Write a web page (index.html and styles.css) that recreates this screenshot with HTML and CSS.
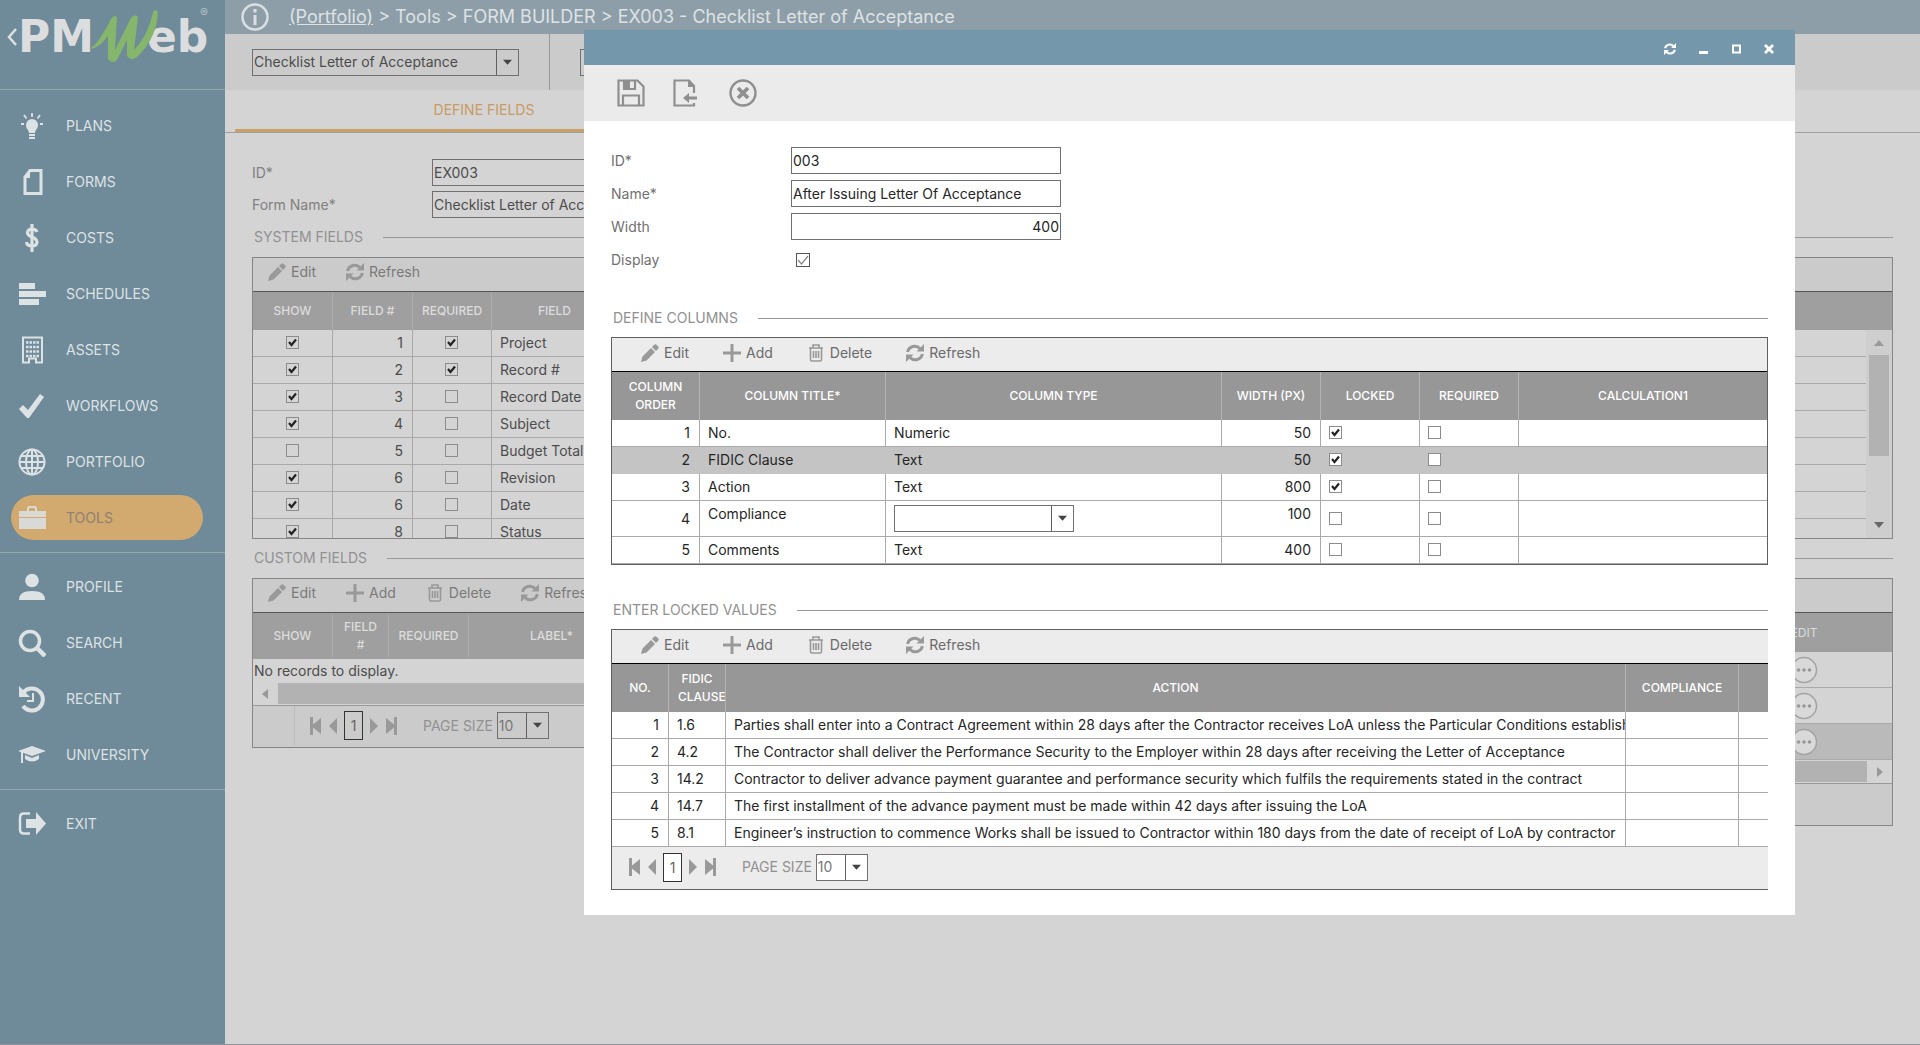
FILE: index.html
```
<!DOCTYPE html>
<html lang="en">

<head>
    <meta charset="UTF-8">
    <meta name="viewport" content="width=device-width, initial-scale=1.0">
    <title>PMWeb - Form Builder</title>
    <link rel="stylesheet" href="styles.css">
</head>

<body>

    <!-- shared icons -->
    <svg class="sprite" aria-hidden="true">
        <symbol id="i-edit" viewBox="0 0 18 18"><path d="M0 18l1.500-5.500L10 4l4 4-8.500 8.500zM11 3l2.200-2.200a1.500 1.500 0 0 1 2.200 0l1.800 1.800a1.500 1.500 0 0 1 0 2.200L15 7z"/></symbol>
        <symbol id="i-add" viewBox="0 0 18 18"><path d="M7.500 0h3v7.500H18v3h-7.500V18h-3v-7.500H0v-3h7.500z"/></symbol>
        <symbol id="i-delete" viewBox="0 0 16 18"><path d="M1 4h14M5 4V1h6v3M2.500 4v11.500q0 1.500 1.500 1.500h8q1.500 0 1.500-1.500V4M5.500 7v7M8 7v7M10.500 7v7" fill="none" stroke="currentColor" stroke-width="1.600"/></symbol>
        <symbol id="i-refresh" viewBox="0 0 18 18"><path d="M1.600 8A7.300 7.300 0 0 1 14 4.500M16.400 10A7.300 7.300 0 0 1 4 13.500" fill="none" stroke="currentColor" stroke-width="3"/><path d="M18 0v7.500h-7.500zM0 18v-7.500h7.500z"/></symbol>
        <symbol id="i-first" viewBox="0 0 12 18"><path d="M0 0h3v7.500L11 1v16L3 10.500V18H0z"/></symbol>
        <symbol id="i-prev" viewBox="0 0 8 18"><path d="M8 1v16L0 9z"/></symbol>
        <symbol id="i-next" viewBox="0 0 8 18"><path d="M0 1v16l8-8z"/></symbol>
        <symbol id="i-last" viewBox="0 0 12 18"><path d="M12 0H9v7.500L1 1v16l8-6.500V18h3z"/></symbol>
        <symbol id="i-dots" viewBox="0 0 28 28"><circle cx="14" cy="14" r="12.500" fill="#d9d9d9" stroke="#a3a3a3" stroke-width="1.500"/><circle cx="8.500" cy="14" r="1.800"/><circle cx="14" cy="14" r="1.800"/><circle cx="19.500" cy="14" r="1.800"/></symbol>
    </svg>

    <aside class="sidebar">
        <div class="brand">
            <svg width="225" height="89" viewBox="0 0 225 89" role="img" aria-label="PMWeb">
                <path d="M16 29l-7 8 7 8" fill="none" stroke="#d9e1e6" stroke-width="2.500"/>
                <text x="18" y="52" class="logo-text">PM</text>
                <text x="147" y="52" class="logo-text">eb</text>
                <path d="M89 49C96 46 104 33 111 19Q114 14 117 17L115 50 131 18Q136 13 138 17L134 50Q148 36 153 12 156 8 158 12 157 38 137 57 131 62 127 56L127 40 117 60Q112 65 108 59L108 36Q99 49 89 49z" fill="#86b56c"/>
                <text x="200" y="17" class="logo-mark">®</text>
            </svg>
        </div>
        <nav>
            <ul class="menu">
                <li><a href="#"><svg viewBox="0 0 28 28"><path d="M14 7a6 6 0 0 0-6 6c0 3.500 2.500 4.500 3 8h6c.500-3.500 3-4.500 3-8a6 6 0 0 0-6-6zM11 22h6v2h-6zM11 25h6v2h-6z"/><path d="M14 1v4M6 3l2.500 3.500M22 3l-2.500 3.500M3 12h3M22 12h3" stroke="currentColor" stroke-width="1.800"/></svg>PLANS</a></li>
                <li><a href="#"><svg viewBox="0 0 28 28"><path d="M12 2.500h11v23H7V9z" fill="none" stroke="currentColor" stroke-width="3"/><path d="M12 2v8H6z"/></svg>FORMS</a></li>
                <li><a href="#"><svg viewBox="0 0 28 28"><path d="M19 8q-1-3-5-3t-4.500 3.500q0 3 4.500 4.500t5 5q0 4-5 4t-5.500-4M14 0v28" fill="none" stroke="currentColor" stroke-width="3.200"/></svg>COSTS</a></li>
                <li><a href="#"><svg viewBox="0 0 28 28"><path d="M1 3h16v6H1zM1 11h27v6H1zM1 19h20v6H1z"/></svg>SCHEDULES</a></li>
                <li><a href="#"><svg viewBox="0 0 28 28"><path d="M5 1.500h19v25h-6v-4h-7v4H5z" fill="none" stroke="currentColor" stroke-width="2"/><path d="M8 6.500h13M8 11h13M8 15.500h13M8 20h13" stroke="currentColor" stroke-width="2.500" stroke-dasharray="2.500 1"/></svg>ASSETS</a></li>
                <li><a href="#"><svg viewBox="0 0 28 28"><path d="M1 17l4-4 5 5L22 2l4 3-15 21H9z"/></svg>WORKFLOWS</a></li>
                <li><a href="#"><svg viewBox="0 0 28 28"><g fill="none" stroke="currentColor" stroke-width="2"><circle cx="14" cy="14" r="12.500"/><ellipse cx="14" cy="14" rx="6" ry="12.500"/><path d="M14 1v26M1 14h26M3 8h22M3 20h22"/></g></svg>PORTFOLIO</a></li>
                <li class="active"><a href="#"><svg viewBox="0 0 28 28"><path d="M9 7V4q0-2 2-2h6q2 0 2 2v3h9v6H1V7zm2 0h6V4h-6zM1 14h27v11H1z"/></svg>TOOLS</a></li>
            </ul>
            <ul class="menu">
                <li><a href="#"><svg viewBox="0 0 28 28"><circle cx="14" cy="7.500" r="6.800"/><path d="M1 27c0-6 4-9 13-9s13 3 13 9z"/></svg>PROFILE</a></li>
                <li><a href="#"><svg viewBox="0 0 28 28"><circle cx="12" cy="12" r="9.500" fill="none" stroke="currentColor" stroke-width="3.500"/><path d="M19 19l8 8" stroke="currentColor" stroke-width="4.500"/></svg>SEARCH</a></li>
                <li><a href="#"><svg viewBox="0 0 28 28"><path d="M5 8a11 11 0 1 1 0 13" fill="none" stroke="currentColor" stroke-width="4"/><path d="M1 1v11h11z"/><path d="M15 8v8h-6" fill="none" stroke="currentColor" stroke-width="2"/></svg>RECENT</a></li>
                <li><a href="#"><svg viewBox="0 0 28 28"><path d="M14 5l14 5-14 5-14-5zM7 14l7 3 7-3v4q-7 5-14 0z"/><path d="M4 11v11" stroke="currentColor" stroke-width="2"/></svg>UNIVERSITY</a></li>
            </ul>
            <ul class="menu">
                <li><a href="#"><svg viewBox="0 0 28 28"><path d="M12 3.500H6q-4 0-4 4v12q0 4 4 4h6" fill="none" stroke="currentColor" stroke-width="2.500"/><path d="M8 9h10V2l10 11.500L18 25v-7H8z"/></svg>EXIT</a></li>
            </ul>
        </nav>
    </aside>

    <main class="page">
        <header class="topbar">
            <svg width="28" height="28" viewBox="0 0 28 28"><circle cx="14" cy="14" r="12.500" fill="none" stroke="#d9dfe3" stroke-width="2.500"/><path d="M14 6v3.500M14 12v10" stroke="#d9dfe3" stroke-width="3"/></svg>
            <p><a href="#">(Portfolio)</a> &gt; Tools &gt; FORM BUILDER &gt; EX003 - Checklist Letter of Acceptance</p>
        </header>

        <div class="record-bar">
            <div class="record-pick">
                <select class="combo" aria-label="Record"><option>Checklist Letter of Acceptance</option></select>
            </div>
            <select class="combo layout-pick" aria-label="Layout"><option></option></select>
        </div>

        <div class="tabs"><a class="tab" href="#">DEFINE FIELDS</a></div>

        <div class="content">
            <div class="field">
                <label for="formId">ID*</label>
                <input type="text" id="formId" value="EX003">
            </div>
            <div class="field">
                <label for="formName">Form Name*</label>
                <input type="text" id="formName" value="Checklist Letter of Acceptance">
            </div>

            <h2 class="section">SYSTEM FIELDS</h2>
            <div class="panel">
                <div class="tools">
                    <button type="button"><svg><use href="#i-edit"/></svg>Edit</button>
                    <button type="button"><svg><use href="#i-refresh"/></svg>Refresh</button>
                </div>
                <div class="scroll-area">
                    <table class="system-table">
                        <colgroup><col class="w80"><col class="w80"><col class="w79"><col class="w126"><col></colgroup>
                        <thead>
                            <tr><th>SHOW</th><th>FIELD #</th><th>REQUIRED</th><th>FIELD</th><th></th></tr>
                        </thead>
                        <tbody>
                            <tr><td class="mid"><input type="checkbox" aria-label="Show" checked></td><td class="num">1</td><td class="mid"><input type="checkbox" aria-label="Required" checked></td><td>Project</td><td></td></tr>
                            <tr><td class="mid"><input type="checkbox" aria-label="Show" checked></td><td class="num">2</td><td class="mid"><input type="checkbox" aria-label="Required" checked></td><td>Record #</td><td></td></tr>
                            <tr><td class="mid"><input type="checkbox" aria-label="Show" checked></td><td class="num">3</td><td class="mid"><input type="checkbox" aria-label="Required"></td><td>Record Date</td><td></td></tr>
                            <tr><td class="mid"><input type="checkbox" aria-label="Show" checked></td><td class="num">4</td><td class="mid"><input type="checkbox" aria-label="Required"></td><td>Subject</td><td></td></tr>
                            <tr><td class="mid"><input type="checkbox" aria-label="Show"></td><td class="num">5</td><td class="mid"><input type="checkbox" aria-label="Required"></td><td>Budget Total</td><td></td></tr>
                            <tr><td class="mid"><input type="checkbox" aria-label="Show" checked></td><td class="num">6</td><td class="mid"><input type="checkbox" aria-label="Required"></td><td>Revision</td><td></td></tr>
                            <tr><td class="mid"><input type="checkbox" aria-label="Show" checked></td><td class="num">6</td><td class="mid"><input type="checkbox" aria-label="Required"></td><td>Date</td><td></td></tr>
                            <tr><td class="mid"><input type="checkbox" aria-label="Show" checked></td><td class="num">8</td><td class="mid"><input type="checkbox" aria-label="Required"></td><td>Status</td><td></td></tr>
                        </tbody>
                    </table>
                    <div class="vscroll">
                        <svg width="12" height="8" viewBox="0 0 12 8"><path d="M6 1l5 6H1z"/></svg>
                        <div class="thumb"></div>
                        <svg class="down" width="12" height="8" viewBox="0 0 12 8"><path d="M6 7L1 1h10z"/></svg>
                    </div>
                </div>
            </div>

            <h2 class="section">CUSTOM FIELDS</h2>
            <div class="columns">
                <div class="panel">
                    <div class="tools">
                        <button type="button"><svg><use href="#i-edit"/></svg>Edit</button>
                        <button type="button"><svg><use href="#i-add"/></svg>Add</button>
                        <button type="button"><svg><use href="#i-delete"/></svg>Delete</button>
                        <button type="button"><svg><use href="#i-refresh"/></svg>Refresh</button>
                    </div>
                    <table class="custom-table">
                        <colgroup><col class="w80"><col class="w56"><col class="w80"><col class="w166"><col></colgroup>
                        <thead>
                            <tr><th>SHOW</th><th>FIELD #</th><th>REQUIRED</th><th>LABEL*</th><th></th></tr>
                        </thead>
                        <tbody>
                            <tr><td class="empty" colspan="5">No records to display.</td></tr>
                        </tbody>
                    </table>
                    <div class="hscroll">
                        <svg width="8" height="12" viewBox="0 0 8 12"><path d="M7 1v10L1 6z"/></svg>
                        <div class="track"></div>
                    </div>
                    <div class="pager">
                        <span class="pager-gap"></span>
                        <button type="button" aria-label="First page"><svg width="12" height="18"><use href="#i-first"/></svg></button>
                        <button type="button" aria-label="Previous page"><svg width="8" height="18"><use href="#i-prev"/></svg></button>
                        <a class="current" href="#">1</a>
                        <button type="button" aria-label="Next page"><svg width="8" height="18"><use href="#i-next"/></svg></button>
                        <button type="button" aria-label="Last page"><svg width="12" height="18"><use href="#i-last"/></svg></button>
                        <label for="customSize">PAGE SIZE</label>
                        <select class="combo size" id="customSize"><option>10</option></select>
                    </div>
                </div>
                <div class="panel">
                    <div class="tools"></div>
                    <table class="edit-table">
                        <colgroup><col><col class="w176"></colgroup>
                        <thead>
                            <tr><th></th><th>EDIT</th></tr>
                        </thead>
                        <tbody>
                            <tr><td></td><td class="mid"><button type="button" aria-label="Edit row"><svg><use href="#i-dots"/></svg></button></td></tr>
                            <tr><td></td><td class="mid"><button type="button" aria-label="Edit row"><svg><use href="#i-dots"/></svg></button></td></tr>
                            <tr class="selected"><td></td><td class="mid"><button type="button" aria-label="Edit row"><svg><use href="#i-dots"/></svg></button></td></tr>
                        </tbody>
                    </table>
                    <div class="hscroll">
                        <div class="track"></div>
                        <svg width="8" height="12" viewBox="0 0 8 12"><path d="M1 1v10l6-5z"/></svg>
                    </div>
                    <div class="pager"></div>
                </div>
            </div>
        </div>
    </main>

    <div class="dialog" role="dialog" aria-label="Table details">
        <div class="dialog-title">
            <button type="button" aria-label="Reload"><svg width="12" height="12" viewBox="0 0 18 18"><use href="#i-refresh"/></svg></button>
            <button type="button" aria-label="Minimize"><svg width="12" height="12" viewBox="0 0 12 12"><path d="M2 8h9v3H2z"/></svg></button>
            <button type="button" aria-label="Maximize"><svg width="12" height="12" viewBox="0 0 12 12"><path d="M3 2.500h7v7H3z" fill="none" stroke="currentColor" stroke-width="2"/></svg></button>
            <button type="button" aria-label="Close"><svg width="12" height="12" viewBox="0 0 12 12"><path d="M2 2l8 8M10 2l-8 8" stroke="currentColor" stroke-width="2.800"/></svg></button>
        </div>
        <div class="dialog-tools">
            <button type="button" aria-label="Save"><svg viewBox="0 0 28 28"><path d="M1.500 1.500h19l6 6v19h-25zM6 26V16.500h16V26M7 2v8h11V2" fill="none" stroke="currentColor" stroke-width="2.200"/><path d="M7 2h6v8H7z"/></svg></button>
            <button type="button" aria-label="Save and exit"><svg viewBox="0 0 28 28"><path d="M21 14V7l-5-5.500H1.500v25H21V24" fill="none" stroke="currentColor" stroke-width="2.200"/><path d="M15 1v7h6zM10 19l6-5v3.500h8v3h-8V24z"/></svg></button>
            <button type="button" aria-label="Cancel"><svg viewBox="0 0 28 28"><circle cx="14" cy="14" r="12.500" fill="none" stroke="currentColor" stroke-width="2.400"/><path d="M9 9l10 10M19 9L9 19" stroke="currentColor" stroke-width="3.800"/></svg></button>
        </div>

        <div class="dialog-body">
            <div class="field">
                <label for="tableId">ID*</label>
                <input type="text" id="tableId" value="003">
            </div>
            <div class="field">
                <label for="tableName">Name*</label>
                <input type="text" id="tableName" value="After Issuing Letter Of Acceptance">
            </div>
            <div class="field">
                <label for="tableWidth">Width</label>
                <input type="text" class="right" id="tableWidth" value="400">
            </div>
            <div class="field">
                <label for="tableDisplay">Display</label>
                <input type="checkbox" class="display-check" id="tableDisplay" checked>
            </div>

            <h2 class="section">DEFINE COLUMNS</h2>
            <div class="panel">
                <div class="tools">
                    <button type="button"><svg><use href="#i-edit"/></svg>Edit</button>
                    <button type="button"><svg><use href="#i-add"/></svg>Add</button>
                    <button type="button"><svg><use href="#i-delete"/></svg>Delete</button>
                    <button type="button"><svg><use href="#i-refresh"/></svg>Refresh</button>
                </div>
                <table>
                    <colgroup><col class="w88"><col class="w186"><col class="w336"><col class="w99"><col class="w99"><col class="w99"><col></colgroup>
                    <thead>
                        <tr><th>COLUMN ORDER</th><th>COLUMN TITLE*</th><th>COLUMN TYPE</th><th>WIDTH (PX)</th><th>LOCKED</th><th>REQUIRED</th><th>CALCULATION1</th></tr>
                    </thead>
                    <tbody>
                        <tr><td class="num">1</td><td>No.</td><td>Numeric</td><td class="num">50</td><td><input type="checkbox" aria-label="Locked" checked></td><td><input type="checkbox" aria-label="Required"></td><td></td></tr>
                        <tr class="selected"><td class="num">2</td><td>FIDIC Clause</td><td>Text</td><td class="num">50</td><td><input type="checkbox" aria-label="Locked" checked></td><td><input type="checkbox" aria-label="Required"></td><td></td></tr>
                        <tr><td class="num">3</td><td>Action</td><td>Text</td><td class="num">800</td><td><input type="checkbox" aria-label="Locked" checked></td><td><input type="checkbox" aria-label="Required"></td><td></td></tr>
                        <tr class="editing"><td class="num">4</td><td class="top">Compliance</td><td><select class="combo type-pick" aria-label="Column type"><option></option></select></td><td class="num top">100</td><td><input type="checkbox" aria-label="Locked"></td><td><input type="checkbox" aria-label="Required"></td><td></td></tr>
                        <tr><td class="num">5</td><td>Comments</td><td>Text</td><td class="num">400</td><td><input type="checkbox" aria-label="Locked"></td><td><input type="checkbox" aria-label="Required"></td><td></td></tr>
                    </tbody>
                </table>
            </div>

            <h2 class="section">ENTER LOCKED VALUES</h2>
            <div class="panel open">
                <div class="tools">
                    <button type="button"><svg><use href="#i-edit"/></svg>Edit</button>
                    <button type="button"><svg><use href="#i-add"/></svg>Add</button>
                    <button type="button"><svg><use href="#i-delete"/></svg>Delete</button>
                    <button type="button"><svg><use href="#i-refresh"/></svg>Refresh</button>
                </div>
                <table>
                    <colgroup><col class="w57"><col class="w57"><col class="w900"><col class="w113"><col></colgroup>
                    <thead>
                        <tr><th>NO.</th><th>FIDIC CLAUSE</th><th>ACTION</th><th>COMPLIANCE</th><th></th></tr>
                    </thead>
                    <tbody>
                        <tr><td class="num">1</td><td>1.6</td><td>Parties shall enter into a Contract Agreement within 28 days after the Contractor receives LoA unless the Particular Conditions establish</td><td></td><td></td></tr>
                        <tr><td class="num">2</td><td>4.2</td><td>The Contractor shall deliver the Performance Security to the Employer within 28 days after receiving the Letter of Acceptance</td><td></td><td></td></tr>
                        <tr><td class="num">3</td><td>14.2</td><td>Contractor to deliver advance payment guarantee and performance security which fulfils the requirements stated in the contract</td><td></td><td></td></tr>
                        <tr><td class="num">4</td><td>14.7</td><td>The first installment of the advance payment must be made within 42 days after issuing the LoA</td><td></td><td></td></tr>
                        <tr><td class="num">5</td><td>8.1</td><td>Engineer’s instruction to commence Works shall be issued to Contractor within 180 days from the date of receipt of LoA by contractor</td><td></td><td></td></tr>
                    </tbody>
                </table>
                <div class="pager">
                    <button type="button" aria-label="First page"><svg width="12" height="18"><use href="#i-first"/></svg></button>
                    <button type="button" aria-label="Previous page"><svg width="8" height="18"><use href="#i-prev"/></svg></button>
                    <a class="current" href="#">1</a>
                    <button type="button" aria-label="Next page"><svg width="8" height="18"><use href="#i-next"/></svg></button>
                    <button type="button" aria-label="Last page"><svg width="12" height="18"><use href="#i-last"/></svg></button>
                    <label for="lockedSize">PAGE SIZE</label>
                    <select class="combo size" id="lockedSize"><option>10</option></select>
                </div>
            </div>
        </div>
    </div>

</body>

</html>
```
FILE: styles.css
```
* {
    box-sizing: border-box;
}

body {
    margin: 0;
    min-height: 100vh;
    display: flex;
    font-family: Inter, "Liberation Sans", sans-serif;
    font-size: 14px;
    line-height: 18px;
    color: #4c4c4c;
    background-color: #d4d4d4;
    border-bottom: 1px solid #8b9399;
}

button, input, select {
    font: inherit;
    color: inherit;
    margin: 0;
}

button {
    display: flex;
    align-items: center;
    padding: 0;
    border: 0;
    background: none;
    cursor: pointer;
}

svg {
    fill: currentColor;
    flex: none;
}

.sprite {
    display: none;
}

/* Sidebar */
.sidebar {
    width: 225px;
    flex: none;
    background-color: #6f8a98;
    color: #dde2e5;
}

.brand svg {
    display: block;
}

.logo-text {
    font: bold 44px "DejaVu Sans", sans-serif;
    fill: #dbdddf;
}

.logo-mark {
    font-size: 12px;
    fill: #b5c2ca;
}

.menu {
    list-style: none;
    margin: 0;
    padding: 6px 11px;
    border-top: 1px solid #93a6b1;
}

.menu:first-child {
    padding-top: 8px;
}

.menu li {
    padding: 5px 0 6px;
}

.menu a {
    display: flex;
    align-items: center;
    gap: 20px;
    width: 192px;
    height: 45px;
    padding-left: 7px;
    border-radius: 23px;
    color: inherit;
    text-decoration: none;
}

.menu svg {
    width: 28px;
    height: 28px;
}

.menu .active a {
    background-color: #d2a96f;
    color: #8f8270;
}

.menu .active svg {
    color: #d9d9d6;
}

/* Page behind the dialog */
.page {
    flex: 1;
    min-width: 0;
}

.topbar {
    display: flex;
    align-items: center;
    gap: 20px;
    height: 34px;
    padding-left: 16px;
    background-color: #8e9ea9;
    color: #dde2e5;
    font-size: 18px;
}

.topbar p {
    margin: 0;
}

.topbar a {
    color: inherit;
}

.record-bar {
    display: flex;
    align-items: center;
    height: 56px;
    padding-left: 27px;
    background-color: #cbcbcb;
}

.record-pick {
    display: flex;
    align-items: center;
    width: 298px;
    height: 56px;
    border-right: 1px solid #999;
    margin-right: 30px;
}

.record-pick .combo {
    width: 267px;
}

.layout-pick {
    width: 200px;
}

.combo {
    height: 27px;
    padding: 0 26px 0 1px;
    border: 1px solid #707070;
    border-radius: 0;
    appearance: none;
    background: transparent url("data:image/svg+xml,%3Csvg xmlns='http://www.w3.org/2000/svg' width='22' height='26'%3E%3Cpath d='M.5 0v26' stroke='%23606060'/%3E%3Cpath d='M7 10h9l-4.500 5z' fill='%23444'/%3E%3C/svg%3E") no-repeat right center;
}

.tabs {
    height: 43px;
    border-bottom: 1px solid #a0a0a0;
    padding-left: 10px;
}

.tab {
    display: block;
    width: 498px;
    height: 42px;
    line-height: 40px;
    text-align: center;
    border-bottom: 3px solid #cba066;
    color: #c99b62;
    text-decoration: none;
}

.content {
    padding: 26px 27px 0;
}

.field {
    display: flex;
    align-items: center;
    margin-bottom: 5px;
    height: 27px;
}

.field label {
    width: 180px;
    color: #808080;
}

.field input[type="text"] {
    width: 270px;
    height: 27px;
    padding: 0 1px;
    border: 1px solid #707070;
    background-color: transparent;
}

.field .right {
    text-align: right;
}

.section {
    display: flex;
    align-items: center;
    gap: 20px;
    margin: 10px 0 11px;
    padding-left: 2px;
    font-size: 14px;
    font-weight: normal;
    color: #919191;
}

.section::after {
    content: "";
    flex: 1;
    height: 1px;
    background-color: #979797;
}

.panel {
    min-width: 0;
    border: 1px solid #868686;
    margin-bottom: 9px;
}

.tools {
    display: flex;
    align-items: center;
    gap: 30px;
    height: 34px;
    padding: 0 15px 5px;
    background-color: #cbcbcb;
    border-bottom: 1px solid #555;
    color: #7a7a7a;
}

.tools button {
    gap: 5px;
}

.tools svg {
    width: 18px;
    height: 18px;
    color: #999;
}

table {
    width: 100%;
    table-layout: fixed;
    border-collapse: separate;
    border-spacing: 0;
}

th {
    padding: 0 9px;
    overflow: hidden;
    background-color: #9f9f9f;
    border-right: 1px solid #acacac;
    font-size: 12px;
    font-weight: 500;
    color: #dcdcdc;
}

td {
    height: 27px;
    padding: 0 9px 0 8px;
    overflow: hidden;
    white-space: nowrap;
    border-right: 1px solid #aaa;
    border-bottom: 1px solid #aaa;
}

th:last-child, td:last-child {
    border-right: 0;
}

.num {
    text-align: right;
}

.mid {
    text-align: center;
}

.w56 { width: 56px; }
.w57 { width: 57px; }
.w79 { width: 79px; }
.w80 { width: 80px; }
.w88 { width: 88px; }
.w99 { width: 99px; }
.w113 { width: 113px; }
.w126 { width: 126px; }
.w166 { width: 166px; }
.w176 { width: 176px; }
.w186 { width: 186px; }
.w336 { width: 336px; }
.w900 { width: 900px; }

input[type="checkbox"] {
    display: inline-block;
    width: 13px;
    height: 13px;
    vertical-align: middle;
    border: 1px solid #8c8c8c;
    appearance: none;
}

td input[type="checkbox"] {
    margin-bottom: 3px;
}

input[type="checkbox"]:checked {
    background-image: url("data:image/svg+xml,%3Csvg xmlns='http://www.w3.org/2000/svg' width='11' height='11'%3E%3Cpath d='M2 5l2.500 3L9 2.500' fill='none' stroke='%23222' stroke-width='2.200'/%3E%3C/svg%3E");
    background-repeat: no-repeat;
    background-position: center;
}

.scroll-area {
    display: flex;
    height: 246px;
    overflow: hidden;
}

.system-table th {
    height: 38px;
}

.vscroll {
    display: flex;
    flex-direction: column;
    align-items: center;
    width: 26px;
    padding: 9px 2px;
    border-top: 38px solid #9f9f9f;
    background-color: #cecece;
    color: #999;
}

.vscroll .thumb {
    width: 20px;
    height: 101px;
    margin-top: 8px;
    background-color: #b2b2b2;
}

.vscroll .down {
    margin-top: auto;
    color: #666;
}

.columns {
    display: grid;
    grid-template-columns: 1fr 1fr;
    gap: 20px;
    align-items: start;
}

.custom-table th {
    height: 46px;
}

.custom-table .empty {
    height: 23px;
    padding: 0 1px;
    border: 0;
}

.hscroll {
    display: flex;
    align-items: center;
    gap: 9px;
    height: 24px;
    padding: 1px 8px;
    border-bottom: 1px solid #999;
    color: #999;
}

.hscroll .track {
    flex: 1;
    height: 21px;
    background-color: #b2b2b2;
}

.edit-table th {
    height: 39px;
    font-weight: normal;
}

.edit-table td {
    height: 36px;
    border-right: 0;
}

.edit-table button {
    display: inline-block;
    height: 28px;
    vertical-align: middle;
    color: #999;
}

.edit-table svg {
    width: 28px;
    height: 28px;
}

.edit-table .selected {
    background-color: #bababa;
}

.pager {
    display: flex;
    align-items: center;
    gap: 7px;
    height: 41px;
    padding: 0 16px 2px 0;
    background-color: #cbcbcb;
    color: #999;
}

.pager-gap {
    align-self: stretch;
    width: 42px;
    margin-right: 8px;
    border-right: 1px solid #bbb;
}

.pager .current {
    width: 19px;
    height: 29px;
    line-height: 27px;
    border: 1px solid #333;
    text-align: center;
    color: #666;
    text-decoration: none;
}

.pager label {
    margin-left: 19px;
    color: #919191;
}

.pager .size {
    width: 52px;
    color: #777;
    margin-left: -3px;
}

/* Dialog window */
.dialog {
    position: absolute;
    top: 30px;
    left: 584px;
    right: 125px;
    background-color: #fff;
}

.dialog-title {
    display: flex;
    align-items: center;
    justify-content: flex-end;
    gap: 21px;
    height: 35px;
    padding: 3px 20px 0;
    background-color: #7497ab;
    color: #fff;
}

.dialog-tools {
    display: flex;
    align-items: center;
    gap: 28px;
    height: 56px;
    padding-left: 33px;
    background-color: #ebebeb;
    color: #8f8f8f;
}

.dialog-tools svg {
    width: 28px;
    height: 28px;
}

.dialog-body {
    padding: 26px 27px 25px;
    color: #262626;
}

.dialog .field {
    margin-bottom: 6px;
}

.dialog .field label {
    color: #707070;
}

.dialog .display-check {
    width: 14px;
    height: 14px;
    margin-left: 5px;
    border-color: #555;
}

.dialog .display-check:checked {
    background-image: url("data:image/svg+xml,%3Csvg xmlns='http://www.w3.org/2000/svg' width='12' height='12'%3E%3Cpath d='M1 6l3.500 4L11 2' fill='none' stroke='%23888' stroke-width='1.300'/%3E%3C/svg%3E");
}

.dialog .section {
    margin: 36px 0 10px;
}

.dialog .panel {
    margin-bottom: 0;
    border-color: #5f5f5f;
}

.dialog .panel.open {
    border-right: 0;
}

.dialog .tools {
    gap: 34px;
    padding: 0 29px 4px;
    background-color: #ececec;
    border-color: #000;
    color: #6a6a6a;
}

.dialog th {
    height: 48px;
    background-color: #979797;
    border-color: #b4b4b4;
    color: #fff;
}

.dialog .editing td {
    height: 36px;
}

.dialog .top {
    padding-top: 4px;
    vertical-align: top;
}

.dialog .selected {
    background-color: #c4c4c4;
}

.dialog .selected td {
    border-color: #c4c4c4;
}

.dialog td input {
    background-color: #fff;
}

.type-pick {
    width: 180px;
    display: block;
    background-color: #fff;
}

.dialog .pager {
    height: 42px;
    padding: 0 17px 2px;
    background-color: #ececec;
}

.dialog .pager .current, .dialog .pager .size {
    background-color: #fff;
}
```
